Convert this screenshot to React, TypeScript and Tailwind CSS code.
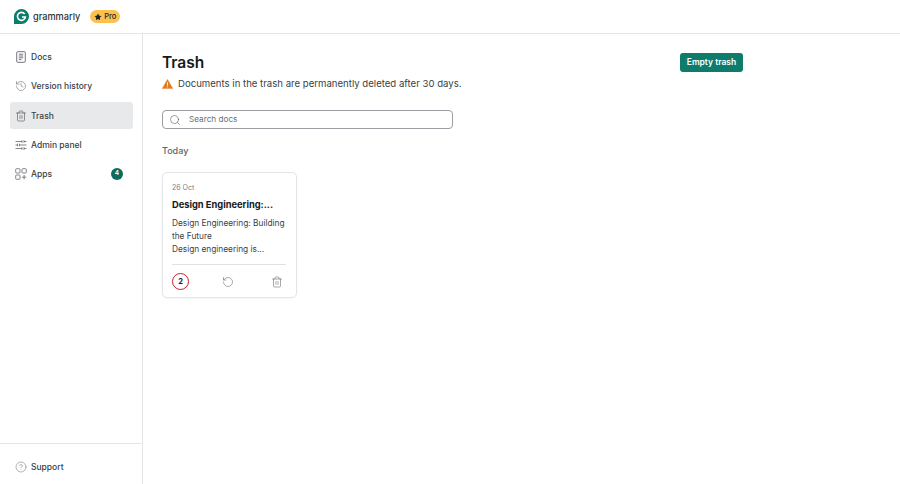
import { CircleHelp, History, RotateCcw, Search, Star, Trash2 } from "lucide-react";

function DocIcon() {
    return (
        <svg width="12" height="12" viewBox="0 0 12 12" fill="none" stroke="currentColor" strokeWidth="0.9">
            <rect x="1.7" y="0.7" width="8.6" height="10.6" rx="1" />
            <path d="M3.8 3.2h4.4M3.8 5h4.4M3.8 6.8h4.4M3.8 8.6h2.6" />
        </svg>
    );
}

function SlidersIcon() {
    return (
        <svg width="12" height="12" viewBox="0 0 12 12" fill="none" stroke="currentColor" strokeWidth="0.8">
            <path d="M0.5 2.5h6.5M9 2.5h2.5M0.5 6h2M4.5 6h7M0.5 9.5h6.5M9 9.5h2.5" />
            <path d="M7 1.2v2.6M9 1.2v2.6M2.5 4.7v2.6M4.5 4.7v2.6M7 8.2v2.6M9 8.2v2.6" />
        </svg>
    );
}

function AppsIcon() {
    return (
        <svg width="12" height="12" viewBox="0 0 12 12" fill="none" stroke="currentColor" strokeWidth="0.8">
            <rect x="0.7" y="0.7" width="4.3" height="4.3" rx="0.8" />
            <rect x="7" y="0.7" width="4.3" height="4.3" rx="0.8" />
            <rect x="0.7" y="7" width="4.3" height="4.3" rx="0.8" />
            <path d="M9.1 7v4.4M6.9 9.2h4.4" />
        </svg>
    );
}

function TrashIcon() {
    return <Trash2 size={12} strokeWidth={1.4} />;
}

function HistoryIcon() {
    return <History size={12} strokeWidth={1.1} />;
}

function WarningIcon() {
    return (
        <svg width="11" height="10" viewBox="0 0 11 10" className="shrink-0">
            <path d="M5.5 0.4 10.8 9.6H0.2z" fill="#e07b20" stroke="#e07b20" strokeWidth="0.4" strokeLinejoin="round" />
            <path d="M5.5 3.4v3.2M5.5 7.4v0.9" stroke="#fff" strokeWidth="0.9" />
        </svg>
    );
}

const navItems = [
    { label: "Docs", icon: DocIcon },
    { label: "Version history", icon: HistoryIcon },
    { label: "Trash", icon: TrashIcon, active: true },
    { label: "Admin panel", icon: SlidersIcon },
    { label: "Apps", icon: AppsIcon, badge: 4 },
];

function Logo() {
    return (
        <svg width="15" height="15" viewBox="0 0 15 15" className="shrink-0">
            <path d="M7.5 0a7.5 7.5 0 0 1 0 15H0V7.5A7.5 7.5 0 0 1 7.5 0z" fill="#0d7c6b" />
            <path d="M10.7 5A4 4 0 1 0 11.4 8H8" fill="none" stroke="#fff" strokeWidth="1.6" />
        </svg>
    );
}

export default function App() {
    return (
        <div className="h-[484px] w-[900px] flex flex-col overflow-hidden bg-white font-['Inter',sans-serif] text-[#1f2328]">
            {/* Top bar */}
            <header className="h-[34px] shrink-0 flex items-center gap-[10px] pl-[14px] border-b border-[#e4e5e7]">
                <div className="flex items-center gap-[4px]">
                    <Logo />
                    <span className="text-[9.2px] font-medium text-[#2e3338]">grammarly</span>
                </div>
                <div className="h-[13px] w-[30px] flex items-center justify-center gap-[2px] rounded-full bg-[#fbc04e] text-[7.5px] font-medium">
                    <Star size={8} fill="#1f2328" strokeWidth={0} />
                    Pro
                </div>
            </header>

            <div className="flex flex-1 min-h-0">
                {/* Sidebar */}
                <aside className="w-[143px] shrink-0 flex flex-col justify-between border-r border-[#e4e5e7]">
                    <nav className="flex flex-col gap-[2.25px] pt-[9.5px] pl-[10px] pr-[9px]">
                        {navItems.map((item) => (
                            <div
                                key={item.label}
                                className={`h-[27px] flex items-center gap-[4px] pl-[5px] pr-[10px] rounded-[3px] text-[8.5px] font-medium text-[#3a3f45] ${item.active ? "bg-[#e8e9ea]" : ""}`}
                            >
                                <span className="text-[#63686e] flex">
                                    <item.icon />
                                </span>
                                <span className="flex-1 pt-[1px]">{item.label}</span>
                                {item.badge && (
                                    <span className="w-[12px] h-[12px] rounded-full bg-[#0d6b5e] text-white text-[6.5px] font-semibold flex items-center justify-center">
                                        {item.badge}
                                    </span>
                                )}
                            </div>
                        ))}
                    </nav>
                    <div className="h-[41px] flex items-center gap-[4px] pl-[15px] pt-[6px] border-t border-[#e4e5e7] text-[8.5px] font-medium text-[#3a3f45]">
                        <CircleHelp size={12} strokeWidth={1} className="text-[#63686e]" />
                        <span className="pt-[1px]">Support</span>
                    </div>
                </aside>

                {/* Main */}
                <main className="flex-1 pl-[19px] pt-[19px]">
                    <div className="w-[581px] flex items-start justify-between">
                        <h1 className="text-[15.5px] leading-[20px] font-semibold text-[#16191c]">Trash</h1>
                        <button className="h-[19px] w-[63px] rounded-[3px] bg-[#0f7c6b] text-white text-[8.5px] font-semibold">
                            Empty trash
                        </button>
                    </div>
                    <div className="mt-[4px] flex items-center gap-[5px] text-[9.6px] leading-[14px] text-[#3a3f45]">
                        <WarningIcon />
                        Documents in the trash are permanently deleted after 30 days.
                    </div>
                    <div className="mt-[19px] w-[291px] h-[19px] flex items-center gap-[8px] pl-[6px] rounded-[4px] border border-[#9a9da1] text-[8.2px] text-[#6a6f75]">
                        <Search size={12} strokeWidth={1.1} className="text-[#4a4f55]" />
                        Search docs
                    </div>
                    <div className="mt-[15px] text-[9px] leading-[14px] font-medium text-[#5f6368]">Today</div>
                    <article className="mt-[14px] w-[135px] h-[126px] flex flex-col rounded-[5px] border border-[#e4e5e7] pl-[9px] pr-[10px] pt-[10px] shadow-[0_1px_2px_rgba(0,0,0,0.04)]">
                        <div className="text-[7px] leading-[10px] text-[#777c82]">26 Oct</div>
                        <div className="mt-[5px] text-[9.3px] leading-[14px] font-bold text-[#16191c]">Design Engineering:...</div>
                        <p className="mt-[5px] text-[8.3px] leading-[13px] text-[#3a3f45]">
                            Design Engineering: Building the Future
                            <br />
                            Design engineering is...
                        </p>
                        <div className="mt-[8px] border-t border-[#e0e1e3] flex items-center justify-between pt-[8px] pr-[3px]">
                            <span className="w-[17px] h-[17px] rounded-full border-[1.5px] border-[#c01f2c] flex items-center justify-center text-[7.5px] font-bold">2</span>
                            <RotateCcw size={12} strokeWidth={1.1} className="text-[#5f6368] mr-[4px]" />
                            <Trash2 size={12} strokeWidth={1.1} className="text-[#5f6368]" />
                        </div>
                    </article>
                </main>
            </div>
        </div>
    );
}
